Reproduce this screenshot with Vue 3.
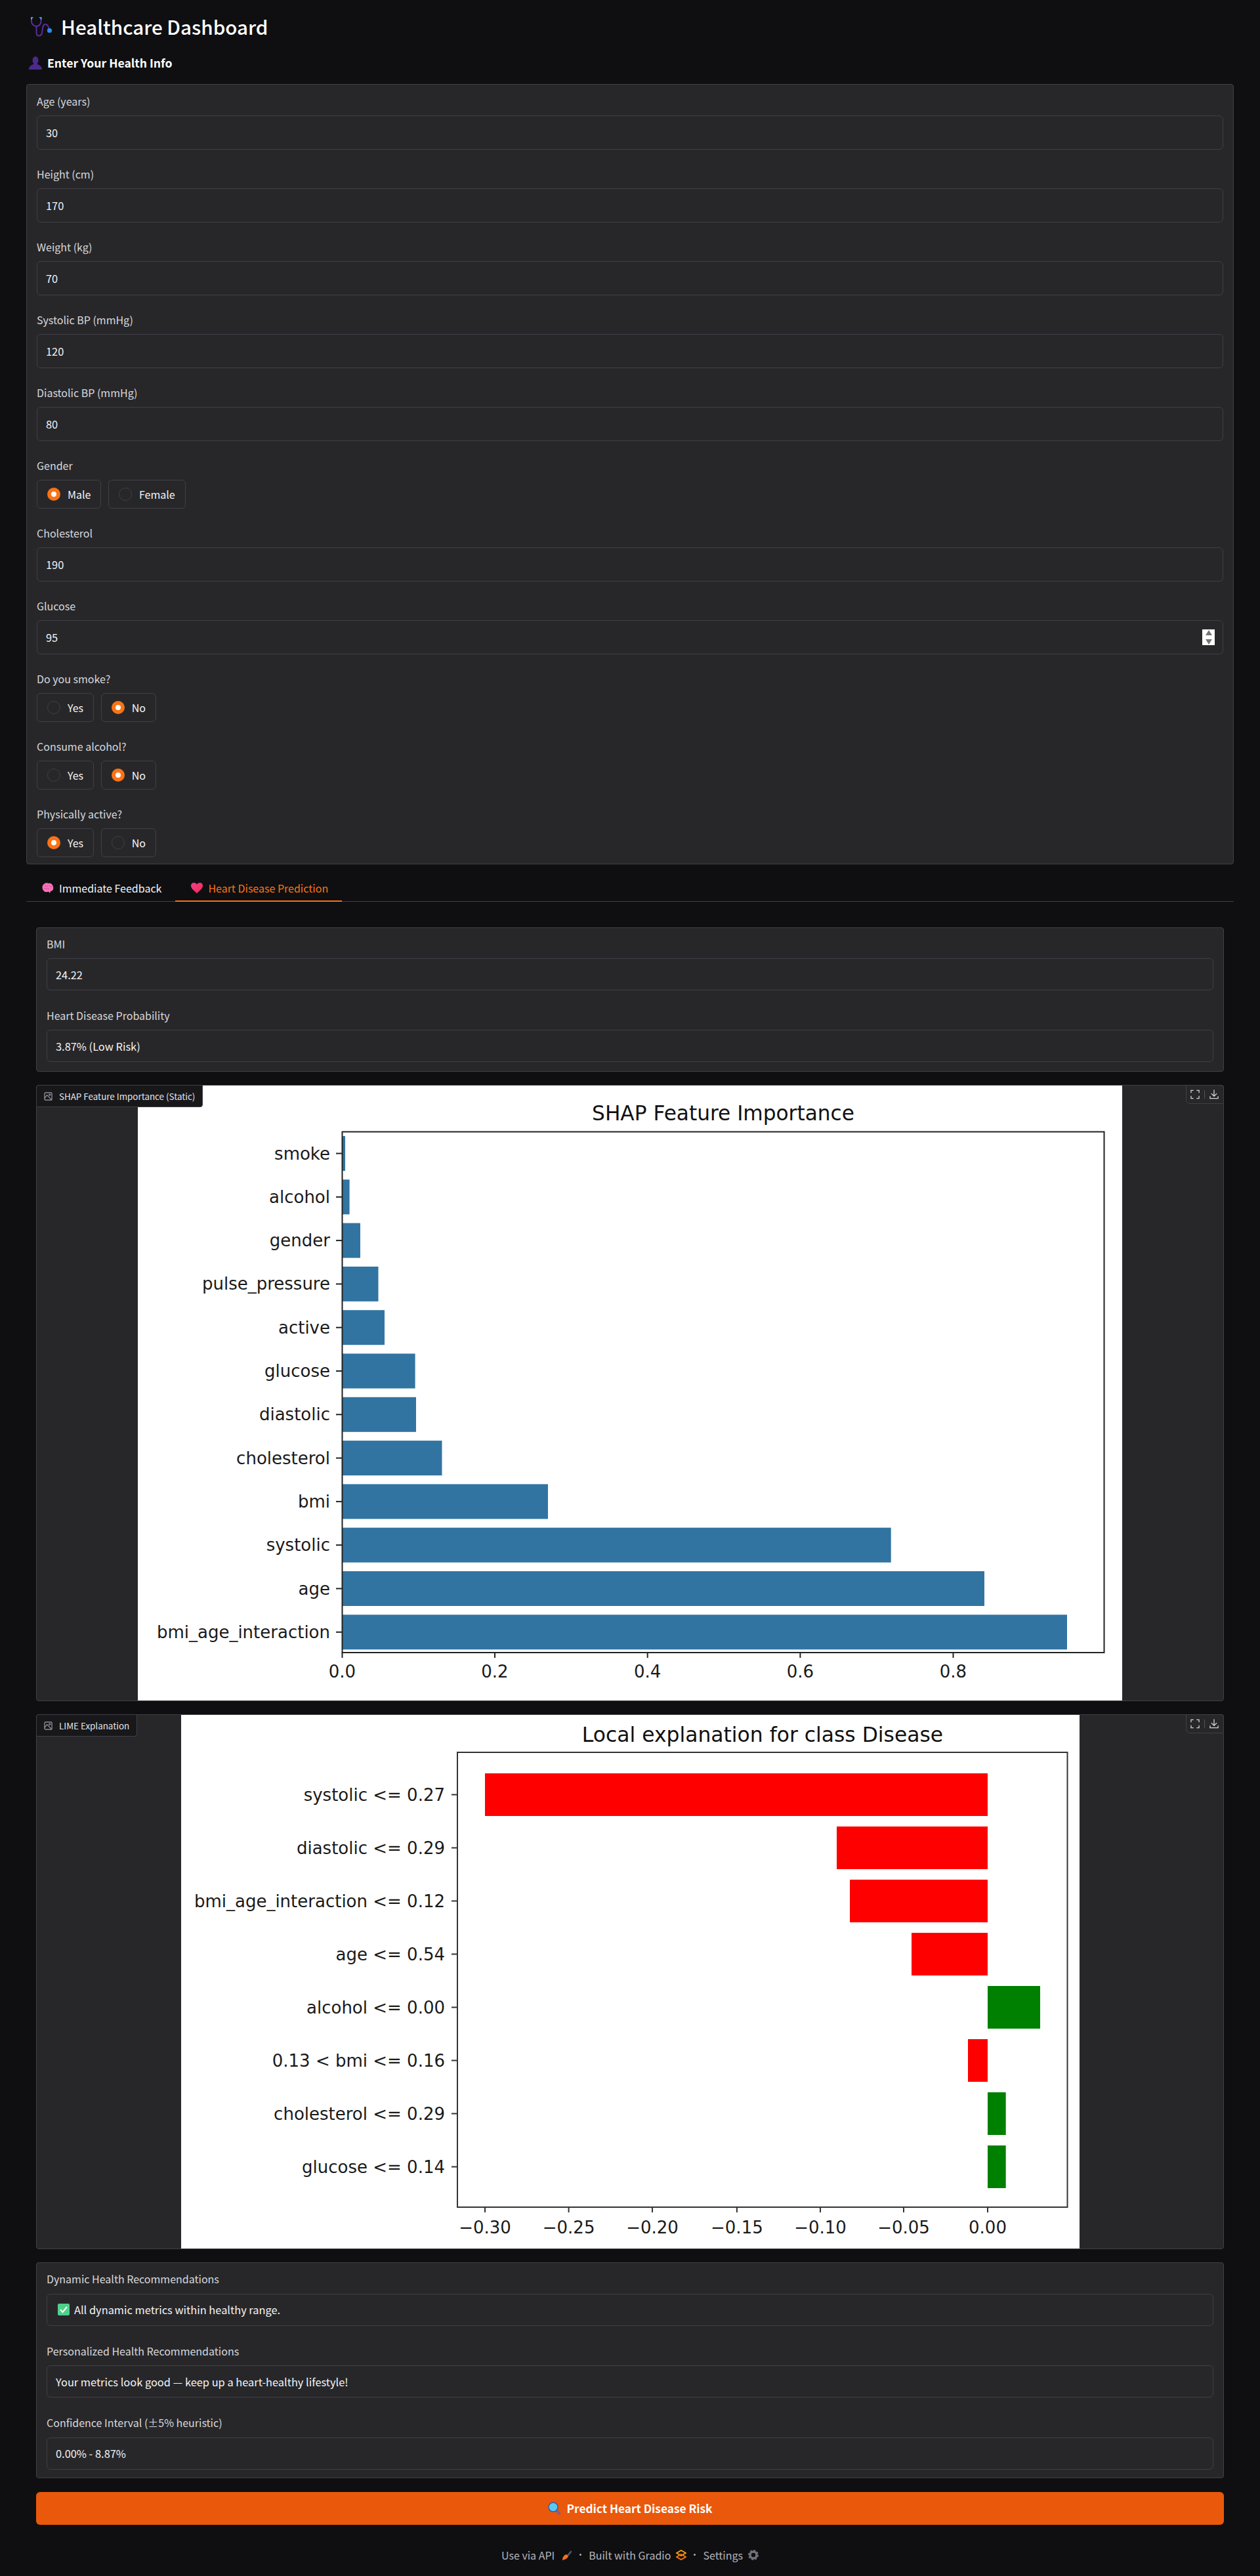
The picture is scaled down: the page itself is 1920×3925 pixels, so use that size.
<script setup>
const inputs1 = [
  { label: 'Age (years)', value: '30' },
  { label: 'Height (cm)', value: '170' },
  { label: 'Weight (kg)', value: '70' },
  { label: 'Systolic BP (mmHg)', value: '120' },
  { label: 'Diastolic BP (mmHg)', value: '80' }
]

const shapBars = [
  { name: 'smoke', end: 526 },
  { name: 'alcohol', end: 532.6 },
  { name: 'gender', end: 549 },
  { name: 'pulse_pressure', end: 576.5 },
  { name: 'active', end: 586 },
  { name: 'glucose', end: 632.6 },
  { name: 'diastolic', end: 634 },
  { name: 'cholesterol', end: 673.5 },
  { name: 'bmi', end: 835 },
  { name: 'systolic', end: 1357.7 },
  { name: 'age', end: 1500 },
  { name: 'bmi_age_interaction', end: 1626 }
].map((b, i) => ({ ...b, y: 1730 + i * 66.3, mid: 1756.5 + i * 66.3 }))

const shapTicks = [
  { x: 521.5, t: '0.0' },
  { x: 754, t: '0.2' },
  { x: 986.7, t: '0.4' },
  { x: 1219.4, t: '0.6' },
  { x: 1452.5, t: '0.8' }
]

const limeBars = [
  { name: 'systolic <= 0.27', end: 738, fill: '#ff0000' },
  { name: 'diastolic <= 0.29', end: 1274, fill: '#ff0000' },
  { name: 'bmi_age_interaction <= 0.12', end: 1294, fill: '#ff0000' },
  { name: 'age <= 0.54', end: 1388, fill: '#ff0000' },
  { name: 'alcohol <= 0.00', end: 1584, fill: '#008000' },
  { name: '0.13 < bmi <= 0.16', end: 1474, fill: '#ff0000' },
  { name: 'cholesterol <= 0.29', end: 1531.7, fill: '#008000' },
  { name: 'glucose <= 0.14', end: 1531.7, fill: '#008000' }
].map((b, i) => ({
  ...b,
  y: 2701 + i * 81,
  mid: 2733.5 + i * 81,
  x: Math.min(b.end, 1504),
  w: Math.abs(b.end - 1504)
}))

const limeTicks = [
  { x: 738, t: '−0.30' },
  { x: 865.6, t: '−0.25' },
  { x: 993, t: '−0.20' },
  { x: 1121.9, t: '−0.15' },
  { x: 1249, t: '−0.10' },
  { x: 1376, t: '−0.05' },
  { x: 1504, t: '0.00' }
]
</script>

<template>
  <div class="page">
    <h1 class="title">
      <svg class="steth" viewBox="0 0 33 30" fill="none" stroke-linecap="round">
        <path d="M1 3V7C1 11 5 14 8.5 14C12 14 15.5 11 15.5 7V3" stroke="#5b2d9e" stroke-width="2" />
        <path d="M1 0V3M15.5 0V3" stroke="#3fa9f5" stroke-width="2" />
        <path d="M1 .8H3M15.5 .8H13.5" stroke="#3fa9f5" stroke-width="1.6" />
        <path d="M8.5 14V24C8.5 30 16 30 17 24C18 17 18 11 22 11C26 11 27 15 27.5 18" stroke="#5b2d9e" stroke-width="2" />
        <circle cx="28.5" cy="20.5" r="3.6" fill="#2a8cf0" />
      </svg>
      Healthcare Dashboard
    </h1>
    <h2 class="section-title">
      <svg class="bust" viewBox="0 0 20 20">
        <ellipse cx="10" cy="6" rx="4.5" ry="6" fill="#4b2a8c" />
        <path d="M0 20C0 14 5 13 8 11H12C15 13 20 14 20 20Z" fill="#4b2a8c" />
      </svg>
      Enter Your Health Info
    </h2>

    <div class="panel form-panel">
      <div v-for="f in inputs1" :key="f.label" class="field">
        <label class="label">{{ f.label }}</label>
        <input class="input" type="text" :value="f.value" readonly />
      </div>

      <div class="field">
        <label class="label">Gender</label>
        <div class="radios">
          <div class="radio"><span class="dot on"></span>Male</div>
          <div class="radio"><span class="dot"></span>Female</div>
        </div>
      </div>

      <div class="field">
        <label class="label">Cholesterol</label>
        <input class="input" type="text" value="190" readonly />
      </div>

      <div class="field">
        <label class="label">Glucose</label>
        <div class="stepper-wrap">
          <input class="input" type="text" value="95" readonly />
          <span class="stepper">
            <i class="arrow up"></i>
            <i class="arrow down"></i>
          </span>
        </div>
      </div>

      <div class="field">
        <label class="label">Do you smoke?</label>
        <div class="radios">
          <div class="radio"><span class="dot"></span>Yes</div>
          <div class="radio"><span class="dot on"></span>No</div>
        </div>
      </div>

      <div class="field">
        <label class="label">Consume alcohol?</label>
        <div class="radios">
          <div class="radio"><span class="dot"></span>Yes</div>
          <div class="radio"><span class="dot on"></span>No</div>
        </div>
      </div>

      <div class="field">
        <label class="label">Physically active?</label>
        <div class="radios">
          <div class="radio"><span class="dot on"></span>Yes</div>
          <div class="radio"><span class="dot"></span>No</div>
        </div>
      </div>
    </div>

    <nav class="tabs">
      <button class="tab">
        <svg class="tab-icon" viewBox="0 0 18 16">
          <path d="M3 2C5 0 8 0 10 1C13 0 16 2 17 6C18 10 16 13 13 13L12 16L10 13.5C6 15 3 14 1.5 11C0 8 0 4 3 2Z" fill="#f472b6" />
          <path d="M4 5C6 4 7 6 9 5M3 9C6 8 8 10 11 9M11 4C12 6 14 5 15 7" stroke="#e0479e" fill="none" stroke-width="1" />
        </svg>
        Immediate Feedback
      </button>
      <button class="tab active">
        <svg class="tab-icon" viewBox="0 0 18 16">
          <defs>
            <linearGradient id="heartFill" x1="0" y1="0" x2="1" y2="1">
              <stop offset="0" stop-color="#f43f8e" />
              <stop offset="1" stop-color="#ef2b4f" />
            </linearGradient>
          </defs>
          <path d="M9 16C3 11 0 8 0 4.5C0 1.5 2 0 4.5 0C6.5 0 8 1 9 2.5C10 1 11.5 0 13.5 0C16 0 18 1.5 18 4.5C18 8 15 11 9 16Z" fill="url(#heartFill)" />
        </svg>
        Heart Disease Prediction
      </button>
    </nav>

    <div class="tab-body">
      <div class="panel out-panel">
        <div class="field">
          <label class="label">BMI</label>
          <input class="input output" type="text" value="24.22" readonly />
        </div>
        <div class="field">
          <label class="label">Heart Disease Probability</label>
          <input class="input output" type="text" value="3.87% (Low Risk)" readonly />
        </div>
      </div>

      <div class="image-block">
        <span class="image-tag">
          <svg class="tag-icon" viewBox="0 0 14 14" fill="none" stroke="#a1a1aa" stroke-width="1.2">
            <rect x="1" y="1" width="12" height="12" rx="1.5" />
            <circle cx="9.5" cy="4.5" r="1.2" />
            <path d="M1 10L5 5L13 13" />
          </svg>
          SHAP Feature Importance (Static)
        </span>
        <div class="image-actions">
          <svg class="action" viewBox="0 0 15 15" fill="none" stroke="#d4d4d8" stroke-width="1.4">
            <path d="M1 5V1H5M10 1H14V5M14 10V14H10M5 14H1V10" />
          </svg>
          <span class="action-sep"></span>
          <svg class="action" viewBox="0 0 15 15" fill="none" stroke="#d4d4d8" stroke-width="1.4">
            <path d="M7.5 0V10M3 6L7.5 10.5L12 6M1 10.5V14H14V10.5" />
          </svg>
        </div>
        <svg class="chart shap" viewBox="210 1653 1500 937">
          <rect x="210" y="1653" width="1500" height="937" fill="#fff" />
          <text x="1102" y="1706" class="chart-title" text-anchor="middle">SHAP Feature Importance</text>
          <g v-for="b in shapBars" :key="b.name">
            <rect x="521.5" :y="b.y" :width="b.end - 521.5" height="53" fill="#3274a1" />
            <path :d="`M512 ${b.mid}H521`" stroke="#222" stroke-width="2" />
            <text x="503" :y="b.mid + 9" class="chart-text" text-anchor="end">{{ b.name }}</text>
          </g>
          <g v-for="t in shapTicks" :key="t.t">
            <path :d="`M${t.x} 2517V2525`" stroke="#222" stroke-width="2" />
            <text :x="t.x" y="2555" class="chart-text" text-anchor="middle">{{ t.t }}</text>
          </g>
          <rect x="521.5" y="1723.5" width="1161" height="793.5" fill="none" stroke="#222" stroke-width="2" />
        </svg>
      </div>

      <div class="image-block">
        <span class="image-tag">
          <svg class="tag-icon" viewBox="0 0 14 14" fill="none" stroke="#a1a1aa" stroke-width="1.2">
            <rect x="1" y="1" width="12" height="12" rx="1.5" />
            <circle cx="9.5" cy="4.5" r="1.2" />
            <path d="M1 10L5 5L13 13" />
          </svg>
          LIME Explanation
        </span>
        <div class="image-actions">
          <svg class="action" viewBox="0 0 15 15" fill="none" stroke="#d4d4d8" stroke-width="1.4">
            <path d="M1 5V1H5M10 1H14V5M14 10V14H10M5 14H1V10" />
          </svg>
          <span class="action-sep"></span>
          <svg class="action" viewBox="0 0 15 15" fill="none" stroke="#d4d4d8" stroke-width="1.4">
            <path d="M7.5 0V10M3 6L7.5 10.5L12 6M1 10.5V14H14V10.5" />
          </svg>
        </div>
        <svg class="chart lime" viewBox="275 2612 1369 813">
          <rect x="275" y="2612" width="1369" height="813" fill="#fff" />
          <text x="1161" y="2653" class="chart-title" text-anchor="middle">Local explanation for class Disease</text>
          <g v-for="b in limeBars" :key="b.name">
            <rect :x="b.x" :y="b.y" :width="b.w" height="65" :fill="b.fill" />
            <path :d="`M687 ${b.mid}H696`" stroke="#333" stroke-width="2" />
            <text x="677" :y="b.mid + 9" class="chart-text" text-anchor="end">{{ b.name }}</text>
          </g>
          <g v-for="t in limeTicks" :key="t.t">
            <path :d="`M${t.x} 3362V3370`" stroke="#333" stroke-width="2" />
            <text :x="t.x" y="3402" class="chart-text" text-anchor="middle">{{ t.t }}</text>
          </g>
          <rect x="696" y="2669" width="929.5" height="693" fill="none" stroke="#333" stroke-width="2" />
        </svg>
      </div>

      <div class="panel out-panel recs">
        <div class="field">
          <label class="label">Dynamic Health Recommendations</label>
          <div class="input output rec">
            <svg class="check" viewBox="0 0 18 18">
              <rect width="18" height="18" rx="2" fill="#4fd08a" />
              <path d="M4 9L7.5 13L14 5" stroke="#fff" stroke-width="2" fill="none" />
            </svg>
            All dynamic metrics within healthy range.
          </div>
        </div>
        <div class="field">
          <label class="label">Personalized Health Recommendations</label>
          <div class="input output rec">Your metrics look good — keep up a heart-healthy lifestyle!</div>
        </div>
        <div class="field">
          <label class="label">Confidence Interval (±5% heuristic)</label>
          <input class="input output" type="text" value="0.00% - 8.87%" readonly />
        </div>
      </div>

      <button class="predict">
        <svg class="predict-icon" viewBox="0 0 20 20">
          <path d="M13 13L18.5 19" stroke="#7b5aa6" stroke-width="3.5" />
          <circle cx="8" cy="8" r="7" fill="#5cc8f0" stroke="#2b5fb8" stroke-width="1.5" />
        </svg>
        Predict Heart Disease Risk
      </button>
    </div>

    <footer class="footer">
      <span class="foot-item">Use via API
        <svg class="foot-icon rocket" viewBox="0 0 16 16">
          <path d="M7 9L13 2C15 1 15.5 2 15 4L9 11Z" fill="#4b5563" />
          <path d="M7 7L10 10C9 13 5 15 1 16C1 12 3 8 7 7Z" fill="#f97316" />
        </svg>
      </span>
      <span class="sep"></span>
      <span class="foot-item">Built with Gradio
        <svg class="foot-icon" viewBox="0 0 16 16" fill="none">
          <path d="M8 1L15 5L8 9L1 5Z" stroke="#f59e0b" stroke-width="2" />
          <path d="M8 7L15 11L8 15L1 11Z" stroke="#f97316" stroke-width="2" />
        </svg>
      </span>
      <span class="sep"></span>
      <span class="foot-item">Settings
        <svg class="foot-icon" viewBox="0 0 16 16" fill="none">
          <circle cx="8" cy="8" r="5" stroke="#71717a" stroke-width="3.5" />
          <circle cx="8" cy="8" r="7" stroke="#71717a" stroke-width="2" stroke-dasharray="3 2.5" />
        </svg>
      </span>
    </footer>
  </div>
</template>

<style>
html,
body {
  margin: 0;
  background: #0f0f11;
}
</style>

<style scoped>
.page {
  box-sizing: border-box;
  width: 1920px;
  min-height: 3925px;
  padding: 21px 40px 0;
  background: #0f0f11;
  color: #f4f4f5;
  font-family: "Noto Sans CJK SC", "Noto Sans", sans-serif;
}

.title {
  display: flex;
  align-items: center;
  gap: 13px;
  margin: 0 0 22px 7px;
  font-size: 29.6px;
  line-height: 40px;
  font-weight: 500;
  color: #fff;
}

.steth {
  width: 33px;
  height: 30px;
}

.section-title {
  display: flex;
  align-items: center;
  gap: 8px;
  margin: 0 0 19px 4px;
  font-size: 17.6px;
  line-height: 26px;
  font-weight: 600;
  color: #fff;
}

.bust {
  width: 20px;
  height: 20px;
}

.panel {
  box-sizing: border-box;
  background: #27272a;
  border: 1px solid #3f3f46;
  border-radius: 4px;
}

.form-panel {
  display: flex;
  flex-direction: column;
  gap: 26px;
  padding: 14px 15px 10px;
}

.field {
  display: flex;
  flex-direction: column;
}

.label {
  font-size: 16px;
  line-height: 22px;
  margin-bottom: 11px;
  color: #d8d8dc;
}

.input {
  box-sizing: border-box;
  width: 100%;
  height: 52px;
  padding: 0 13px;
  background: #27272a;
  border: 1px solid #3f3f46;
  border-radius: 6px;
  color: #f4f4f5;
  font-family: inherit;
  font-size: 16.4px;
  outline: none;
}

.input.output {
  height: 49px;
}

.rec {
  display: flex;
  align-items: center;
  gap: 7px;
}

.check {
  width: 18px;
  height: 18px;
  margin-left: 3px;
}

.stepper-wrap {
  position: relative;
}

.stepper {
  position: absolute;
  right: 13px;
  top: 14px;
  display: flex;
  flex-direction: column;
  justify-content: space-between;
  align-items: center;
  box-sizing: border-box;
  width: 19px;
  height: 24px;
  padding: 1px 0;
  background: #fff;
}

.arrow {
  width: 0;
  height: 0;
  border-left: 5.5px solid transparent;
  border-right: 5.5px solid transparent;
}

.arrow.up {
  border-bottom: 8px solid #757575;
}

.arrow.down {
  border-top: 8px solid #757575;
}

.radios {
  display: flex;
  gap: 10.5px;
}

.radio {
  display: flex;
  align-items: center;
  gap: 11px;
  box-sizing: border-box;
  height: 44px;
  padding: 0 15px;
  border: 1px solid #3f3f46;
  border-radius: 6px;
  font-size: 16px;
  color: #f4f4f5;
}

.dot {
  box-sizing: border-box;
  width: 20px;
  height: 20px;
  background: #27272a;
  border: 1px solid #3f3f46;
  border-radius: 50%;
}

.dot.on {
  border: 6.5px solid #f97316;
  background: #fff;
}

.tabs {
  display: flex;
  height: 56px;
  border-bottom: 1px solid #3f3f46;
}

.tab {
  display: flex;
  align-items: center;
  gap: 8px;
  margin-bottom: -1px;
  padding: 16px 21px 0 24px;
  background: none;
  border: 0;
  border-bottom: 2px solid transparent;
  color: #f4f4f5;
  font-family: inherit;
  font-size: 16px;
}

.tab.active {
  color: #f97316;
  border-bottom-color: #f97316;
}

.tab-icon {
  width: 18px;
  height: 16px;
}

.tab-body {
  display: flex;
  flex-direction: column;
  gap: 20px;
  margin: 39px 15px 0;
}

.out-panel {
  display: flex;
  flex-direction: column;
  gap: 27px;
  padding: 13px 15px 14px;
}

.recs {
  padding-bottom: 12px;
}

.recs .label {
  margin-bottom: 11.6px;
}

.image-block {
  position: relative;
  display: flex;
  justify-content: center;
  background: #27272a;
  border: 1px solid #3f3f46;
  border-radius: 4px;
}

.chart {
  display: block;
}

.shap {
  width: 1500px;
  height: 937px;
}

.lime {
  width: 1369px;
  height: 813px;
}

.chart-title {
  font-family: "DejaVu Sans", sans-serif;
  font-size: 31.2px;
  fill: #111;
}

.chart-text {
  font-family: "DejaVu Sans", sans-serif;
  font-size: 26px;
  fill: #1a1a1a;
}

.lime .chart-title {
  font-size: 31.4px;
}

.image-tag {
  position: absolute;
  left: -1px;
  top: -1px;
  z-index: 1;
  display: flex;
  align-items: center;
  gap: 10px;
  height: 32px;
  padding: 0 11px;
  background: #18181b;
  border: 1px solid #3f3f46;
  border-radius: 4px 0 4px 0;
  font-size: 13.4px;
  color: #e4e4e7;
}

.tag-icon {
  width: 13px;
  height: 13px;
}

.image-actions {
  position: absolute;
  right: -1px;
  top: -1px;
  display: flex;
  align-items: center;
  gap: 7px;
  box-sizing: border-box;
  width: 58px;
  height: 29px;
  padding: 0 6px;
  border: 1px solid #3f3f46;
  border-radius: 0 4px 0 6px;
}

.action {
  width: 14px;
  height: 15px;
}

.action-sep {
  width: 1px;
  height: 13px;
  background: #52525b;
}

.predict {
  display: flex;
  align-items: center;
  justify-content: center;
  gap: 9px;
  height: 50px;
  margin-top: 1px;
  background: #ea580c;
  border: 0;
  border-radius: 6px;
  color: #fff;
  font-family: inherit;
  font-size: 17.3px;
  font-weight: 700;
}

.predict-icon {
  width: 20px;
  height: 20px;
}

.footer {
  display: flex;
  align-items: center;
  justify-content: center;
  gap: 11px;
  margin-top: 35px;
  height: 22px;
  font-size: 16px;
  color: #b4b4bb;
}

.foot-item {
  display: flex;
  align-items: center;
  gap: 8px;
}

.foot-icon {
  width: 16px;
  height: 16px;
}

.rocket {
  margin-left: 3px;
}

.sep {
  width: 3px;
  height: 3px;
  border-radius: 50%;
  background: #b4b4bb;
}
</style>
